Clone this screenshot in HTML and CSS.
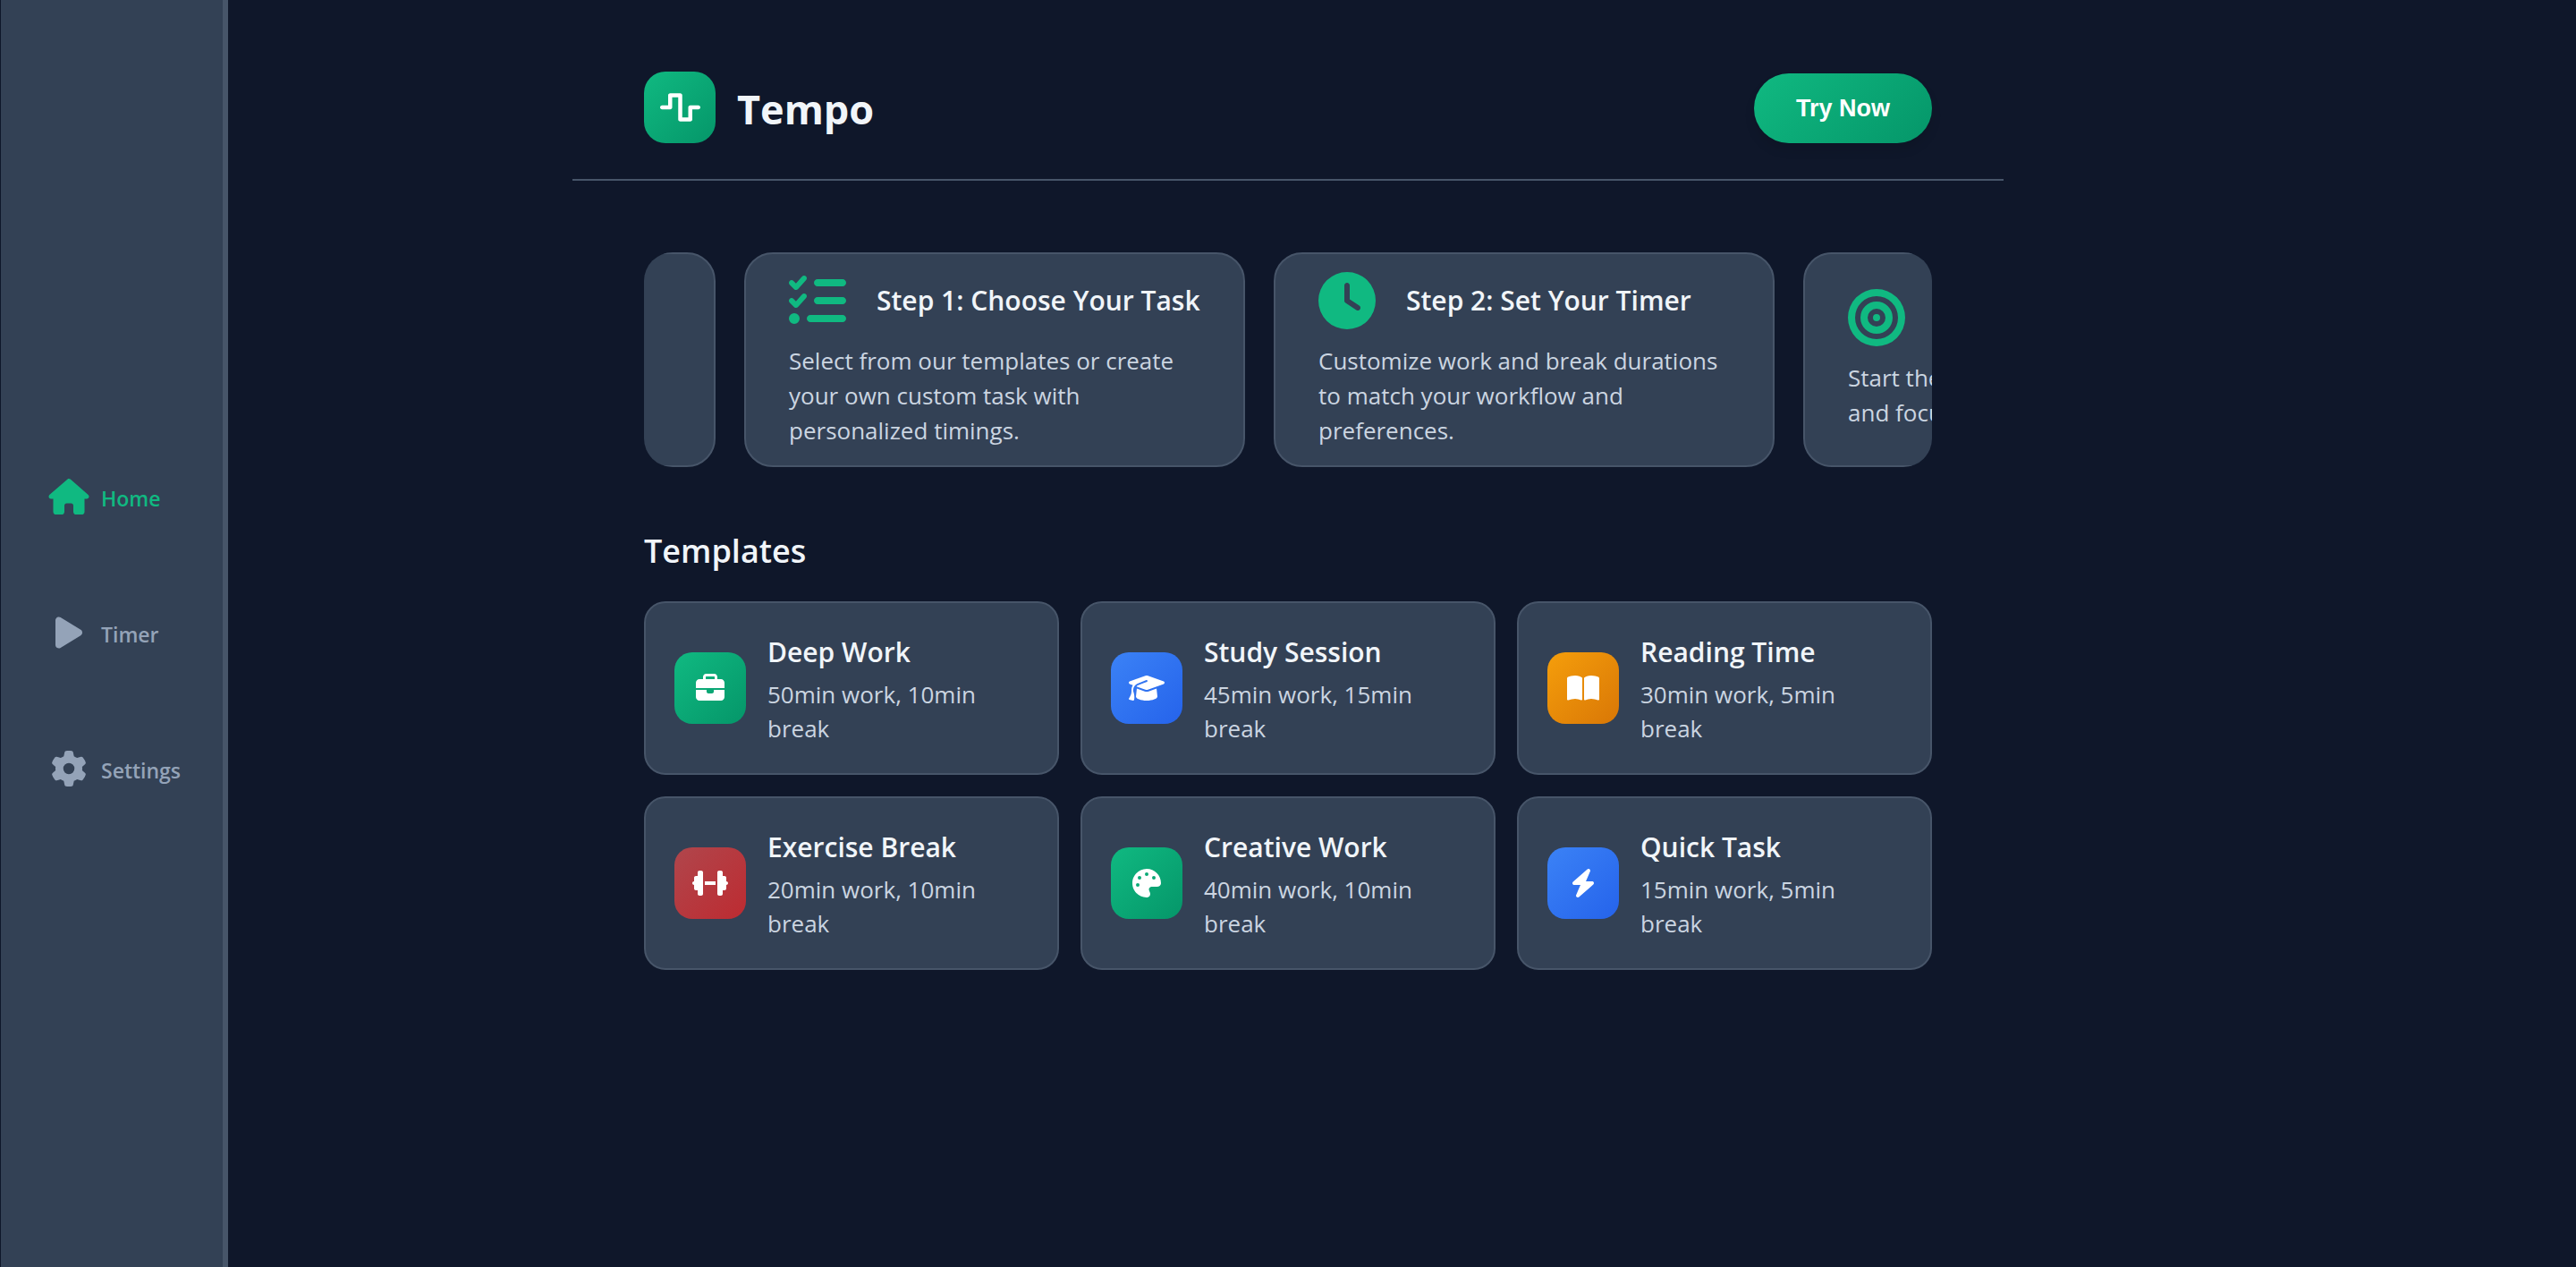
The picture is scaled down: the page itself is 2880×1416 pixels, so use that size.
FILE: index.html
```html
<!DOCTYPE html>
<html lang="en">
<head>
<meta charset="utf-8">
<meta name="viewport" content="width=device-width, initial-scale=1">
<title>Tempo</title>
<link rel="stylesheet" href="styles.css">
</head>
<body>
<div class="app">
  <nav class="sidebar" aria-label="Main">
    <a class="nav-item active" href="#home">
      <svg class="nav-icon" viewBox="0 0 576 512" aria-hidden="true"><path d="M575.8 255.5c0 18-15 32.1-32 32.1h-32l.7 160.2c0 2.7-.2 5.4-.5 8.1V472c0 22.1-17.9 40-40 40H456c-1.1 0-2.2 0-3.3-.1c-1.4 .1-2.8 .1-4.2 .1H416 392c-22.1 0-40-17.9-40-40V448 384c0-17.7-14.3-32-32-32H256c-17.7 0-32 14.3-32 32v64 24c0 22.1-17.9 40-40 40H160 128.1c-1.5 0-3-.1-4.5-.2c-1.2 .1-2.4 .2-3.6 .2H104c-22.1 0-40-17.9-40-40V360c0-.9 0-1.9 .1-2.8V287.6H32c-18 0-32-14-32-32.1c0-9 3-17 10-24L266.4 8c7-7 15-8 22-8s15 2 21 7L564.8 231.5c8 7 12 15 11 24z"/></svg>
      <span class="nav-label">Home</span>
    </a>
    <a class="nav-item" href="#timer">
      <svg class="nav-icon" viewBox="0 0 384 512" aria-hidden="true"><path d="M73 39c-14.8-9.1-33.4-9.4-48.5-.9S0 62.6 0 80V432c0 17.4 9.4 33.4 24.5 41.9s33.7 8.1 48.5-.9L361 297c14.3-8.7 23-24.2 23-41s-8.7-32.2-23-41L73 39z"/></svg>
      <span class="nav-label">Timer</span>
    </a>
    <a class="nav-item" href="#settings">
      <svg class="nav-icon" viewBox="0 0 512 512" aria-hidden="true"><path d="M495.9 166.6c3.2 8.7 .5 18.4-6.4 24.6l-43.3 39.4c1.1 8.3 1.7 16.8 1.7 25.4s-.6 17.1-1.7 25.4l43.3 39.4c6.9 6.2 9.6 15.9 6.4 24.6c-4.4 11.9-9.7 23.3-15.8 34.3l-4.7 8.1c-6.6 11-14 21.4-22.1 31.2c-5.9 7.2-15.7 9.6-24.5 6.8l-55.7-17.7c-13.4 10.3-28.2 18.9-44 25.4l-12.5 57.1c-2 9.1-9 16.3-18.2 17.8c-13.8 2.3-28 3.5-42.5 3.5s-28.7-1.2-42.5-3.5c-9.2-1.5-16.2-8.7-18.2-17.8l-12.5-57.1c-15.8-6.5-30.6-15.1-44-25.4L83.1 425.9c-8.8 2.8-18.6 .3-24.5-6.8c-8.1-9.8-15.5-20.2-22.1-31.2l-4.7-8.1c-6.1-11-11.4-22.4-15.8-34.3c-3.2-8.7-.5-18.4 6.4-24.6l43.3-39.4C64.6 273.1 64 264.6 64 256s.6-17.1 1.7-25.4L22.4 191.2c-6.9-6.2-9.6-15.9-6.4-24.6c4.4-11.9 9.7-23.3 15.8-34.3l4.7-8.1c6.6-11 14-21.4 22.1-31.2c5.9-7.2 15.7-9.6 24.5-6.8l55.7 17.7c13.4-10.3 28.2-18.9 44-25.4l12.5-57.1c2-9.1 9-16.3 18.2-17.8C227.3 1.2 241.5 0 256 0s28.7 1.2 42.5 3.5c9.2 1.5 16.2 8.7 18.2 17.8l12.5 57.1c15.8 6.5 30.6 15.1 44 25.4l55.7-17.7c8.8-2.8 18.6-.3 24.5 6.8c8.1 9.8 15.5 20.2 22.1 31.2l4.7 8.1c6.1 11 11.4 22.4 15.8 34.3zM256 336a80 80 0 1 0 0-160 80 80 0 1 0 0 160z"/></svg>
      <span class="nav-label">Settings</span>
    </a>
  </nav>

  <div class="page">
    <header class="header">
      <div class="brand">
        <div class="logo">
          <svg class="logo-icon" viewBox="0 0 640 512" aria-hidden="true"><path d="M128 64c0-17.7 14.3-32 32-32H320c17.7 0 32 14.3 32 32V416h96V256c0-17.7 14.3-32 32-32H608c17.7 0 32 14.3 32 32s-14.3 32-32 32H512V448c0 17.7-14.3 32-32 32H320c-17.7 0-32-14.3-32-32V96H192V256c0 17.7-14.3 32-32 32H32c-17.7 0-32-14.3-32-32s14.3-32 32-32h96V64z"/></svg>
        </div>
        <h1 class="brand-name">Tempo</h1>
      </div>
      <button class="cta" type="button">Try Now</button>
    </header>

    <main class="content">
      <section class="carousel" aria-label="How it works">
        <div class="track">
          <article class="step" aria-hidden="true"></article>
          <article class="step">
            <div class="step-head">
              <svg class="step-icon" viewBox="0 0 512 512" aria-hidden="true"><path d="M152.1 38.2c9.9 8.9 10.7 24 1.8 33.9l-72 80c-4.4 4.9-10.6 7.8-17.2 7.9s-12.9-2.4-17.6-7L7 113C-2.3 103.6-2.3 88.4 7 79s24.6-9.4 33.9 0l22.1 22.1 55.1-61.2c8.9-9.9 24-10.7 33.9-1.8zm0 160c9.9 8.9 10.7 24 1.8 33.9l-72 80c-4.4 4.9-10.6 7.8-17.2 7.9s-12.9-2.4-17.6-7L7 273c-9.4-9.4-9.4-24.6 0-33.9s24.6-9.4 33.9 0l22.1 22.1 55.1-61.2c8.9-9.9 24-10.7 33.9-1.8zM224 96c0-17.7 14.3-32 32-32H480c17.7 0 32 14.3 32 32s-14.3 32-32 32H256c-17.7 0-32-14.3-32-32zm0 160c0-17.7 14.3-32 32-32H480c17.7 0 32 14.3 32 32s-14.3 32-32 32H256c-17.7 0-32-14.3-32-32zM160 416c0-17.7 14.3-32 32-32H480c17.7 0 32 14.3 32 32s-14.3 32-32 32H192c-17.7 0-32-14.3-32-32zM48 368a48 48 0 1 1 0 96 48 48 0 1 1 0-96z"/></svg>
              <h3 class="card-title">Step 1: Choose Your Task</h3>
            </div>
            <p class="step-text">Select from our templates or create your own custom task with personalized timings.</p>
          </article>
          <article class="step">
            <div class="step-head">
              <svg class="step-icon" viewBox="0 0 512 512" aria-hidden="true"><path fill-rule="evenodd" d="M256 0a256 256 0 1 1 0 512A256 256 0 1 1 256 0zM232 120V256c0 8 4 15.5 10.7 20l96 64c11 7.4 25.9 4.4 33.3-6.7s4.4-25.9-6.7-33.3L280 243.2V120c0-13.3-10.7-24-24-24s-24 10.7-24 24z"/></svg>
              <h3 class="card-title">Step 2: Set Your Timer</h3>
            </div>
            <p class="step-text">Customize work and break durations to match your workflow and preferences.</p>
          </article>
          <article class="step">
            <div class="step-head">
              <svg class="step-icon" viewBox="0 0 512 512" aria-hidden="true"><path fill-rule="evenodd" d="M448 256A192 192 0 1 0 64 256a192 192 0 1 0 384 0zM0 256a256 256 0 1 1 512 0A256 256 0 1 1 0 256zm256 80a80 80 0 1 0 0-160 80 80 0 1 0 0 160zm0-224a144 144 0 1 1 0 288 144 144 0 1 1 0-288zM224 256a32 32 0 1 1 64 0 32 32 0 1 1 -64 0z"/></svg>
            </div>
            <p class="step-text">Start the<br>and focus</p>
          </article>
        </div>
      </section>

      <section class="templates">
        <h2 class="section-title">Templates</h2>
        <div class="grid">
          <article class="template">
            <div class="badge green"><svg class="badge-icon" viewBox="0 0 512 512" aria-hidden="true"><path d="M184 48H328c4.4 0 8 3.6 8 8V96H176V56c0-4.4 3.6-8 8-8zm-56 8V96H64C28.7 96 0 124.7 0 160v96H192 320 512V160c0-35.3-28.7-64-64-64H384V56c0-30.9-25.1-56-56-56H184c-30.9 0-56 25.1-56 56zM512 288H320v32c0 17.7-14.3 32-32 32H224c-17.7 0-32-14.3-32-32V288H0V416c0 35.3 28.7 64 64 64H448c35.3 0 64-28.7 64-64V288z"/></svg></div>
            <div class="template-body">
              <h3 class="card-title">Deep Work</h3>
              <p class="template-text">50min work, 10min break</p>
            </div>
          </article>
          <article class="template">
            <div class="badge blue"><svg class="badge-icon" viewBox="0 0 640 512" aria-hidden="true"><path d="M320 32c-8.1 0-16.1 1.4-23.7 4.1L15.8 137.4C6.3 140.9 0 149.9 0 160s6.3 19.1 15.8 22.6l57.9 20.9C57.3 229.3 48 259.8 48 291.9v28.1c0 28.4-10.8 57.7-22.3 80.8c-6.5 13-13.9 25.8-22.5 37.6C0 442.7-.9 448.3 .9 453.4s6 8.9 11.2 10.2l64 16c4.2 1.1 8.7 .3 12.4-2s6.3-6.1 7.1-10.4c8.6-42.8 4.3-81.2-2.1-108.7C90.3 344.3 86 329.8 80 316.5V291.9c0-30.2 10.2-58.7 27.9-81.5c12.9-15.5 29.6-28 49.2-35.7l157-61.7c8.2-3.2 17.5 .8 20.7 9s-.8 17.5-9 20.7l-157 61.7c-12.4 4.9-23.3 12.4-32.2 21.6l159.6 57.6c7.6 2.7 15.6 4.1 23.7 4.1s16.1-1.4 23.7-4.1L624.2 182.6c9.5-3.4 15.8-12.5 15.8-22.6s-6.3-19.1-15.8-22.6L343.7 36.1C336.1 33.4 328.1 32 320 32zM128 408c0 35.3 86 72 192 72s192-36.7 192-72L496.7 262.6 354.5 314c-11.1 4-22.8 6-34.5 6s-23.5-2-34.5-6L143.3 262.6 128 408z"/></svg></div>
            <div class="template-body">
              <h3 class="card-title">Study Session</h3>
              <p class="template-text">45min work, 15min break</p>
            </div>
          </article>
          <article class="template">
            <div class="badge orange"><svg class="badge-icon" viewBox="0 0 576 512" aria-hidden="true"><path d="M249.6 471.5c10.8 3.8 22.4-4.1 22.4-15.5V78.6c0-4.2-1.6-8.4-5-11C247.4 52 202.4 32 144 32C93.5 32 46.3 45.3 18.1 56.1C6.8 60.5 0 71.7 0 83.8V454.1c0 11.9 12.8 20.2 24.1 16.5C55.6 460.1 105.5 448 144 448c33.9 0 79 14 105.6 23.5zm76.8 0C353 462 398.1 448 432 448c38.5 0 88.4 12.1 119.9 22.6c11.3 3.8 24.1-4.6 24.1-16.5V83.8c0-12.1-6.8-23.3-18.1-27.6C529.7 45.3 482.5 32 432 32c-58.4 0-103.4 20-123 35.6c-3.3 2.6-5 6.8-5 11V456c0 11.4 11.7 19.3 22.4 15.5z"/></svg></div>
            <div class="template-body">
              <h3 class="card-title">Reading Time</h3>
              <p class="template-text">30min work, 5min break</p>
            </div>
          </article>
          <article class="template">
            <div class="badge red"><svg class="badge-icon" viewBox="0 0 640 512" aria-hidden="true"><path d="M96 64c0-17.7 14.3-32 32-32h32c17.7 0 32 14.3 32 32V224v64V448c0 17.7-14.3 32-32 32H128c-17.7 0-32-14.3-32-32V384H64c-17.7 0-32-14.3-32-32V288c-17.7 0-32-14.3-32-32s14.3-32 32-32V160c0-17.7 14.3-32 32-32H96V64zm448 0v64h32c17.7 0 32 14.3 32 32v64c17.7 0 32 14.3 32 32s-14.3 32-32 32v64c0 17.7-14.3 32-32 32H544v64c0 17.7-14.3 32-32 32H480c-17.7 0-32-14.3-32-32V288 224 64c0-17.7 14.3-32 32-32h32c17.7 0 32 14.3 32 32zM416 224v64H224V224H416z"/></svg></div>
            <div class="template-body">
              <h3 class="card-title">Exercise Break</h3>
              <p class="template-text">20min work, 10min break</p>
            </div>
          </article>
          <article class="template">
            <div class="badge green"><svg class="badge-icon" viewBox="0 0 512 512" aria-hidden="true"><path fill-rule="evenodd" d="M512 256c0 .9 0 1.8 0 2.7c-.4 36.5-33.6 61.3-70.1 61.3H344c-26.5 0-48 21.5-48 48c0 3.4 .4 6.7 1 9.9c2.1 10.2 6.5 20 10.8 29.9c6.1 13.8 12.1 27.5 12.1 42c0 31.8-21.6 60.7-53.4 62c-3.5 .1-7 .2-10.6 .2C114.6 512 0 397.4 0 256S114.6 0 256 0S512 114.6 512 256zM128 288a32 32 0 1 0 -64 0 32 32 0 1 0 64 0zm0-96a32 32 0 1 0 0-64 32 32 0 1 0 0 64zM288 96a32 32 0 1 0 -64 0 32 32 0 1 0 64 0zm96 96a32 32 0 1 0 0-64 32 32 0 1 0 0 64z"/></svg></div>
            <div class="template-body">
              <h3 class="card-title">Creative Work</h3>
              <p class="template-text">40min work, 10min break</p>
            </div>
          </article>
          <article class="template">
            <div class="badge blue"><svg class="badge-icon" viewBox="0 0 448 512" aria-hidden="true"><path d="M349.4 44.6c5.9-13.7 1.5-29.7-10.6-38.5s-28.6-8-39.9 1.8l-256 224c-10 8.8-13.6 22.9-8.9 35.3S50.7 288 64 288H175.5L98.6 467.4c-5.9 13.7-1.5 29.7 10.6 38.5s28.6 8 39.9-1.8l256-224c10-8.8 13.6-22.9 8.9-35.3s-16.6-20.7-30-20.7H272.5L349.4 44.6z"/></svg></div>
            <div class="template-body">
              <h3 class="card-title">Quick Task</h3>
              <p class="template-text">15min work, 5min break</p>
            </div>
          </article>
        </div>
      </section>
    </main>
  </div>
</div>
</body>
</html>
```
FILE: styles.css
```css
:root {
  --bg: #0f172a;
  --surface: #334155;
  --border: #475569;
  --text: #f1f5f9;
  --text-soft: #cbd5e1;
  --text-muted: #94a3b8;
  --accent: #10b981;
  --accent-dark: #059669;
}

* {
  box-sizing: border-box;
}

body {
  margin: 0;
  background: var(--bg);
  color: var(--text);
  font-family: "Segoe UI", "Open Sans", "Noto Sans", sans-serif;
}

h1, h2, h3, p {
  margin: 0;
}

svg {
  display: block;
  fill: currentColor;
}

/* Equal side columns keep the page centred in the window */
.app {
  display: grid;
  grid-template-columns: 255px minmax(0, 1fr) 255px;
  min-height: 100vh;
}

.sidebar {
  display: flex;
  flex-direction: column;
  justify-content: center;
  gap: 104px;
  padding: 0 0 2px 53px;
  background: var(--surface);
  border-left: 1px solid var(--bg);
  border-right: 6px solid var(--border);
}

.nav-item {
  display: flex;
  align-items: center;
  gap: 13px;
  height: 48px;
  color: var(--text-muted);
  text-decoration: none;
}

.nav-item.active {
  color: var(--accent);
}

.nav-icon {
  width: 46px;
  height: 40px;
}

.nav-label {
  padding-top: 4px;
  font-size: 23px;
  font-weight: 600;
  line-height: 32px;
}

.page {
  width: 100%;
  max-width: 1600px;
  margin: 0 auto;
}

.header {
  display: flex;
  align-items: flex-end;
  justify-content: space-between;
  padding: 80px 80px 40px;
  border-bottom: 2px solid var(--border);
}

.brand {
  display: flex;
  align-items: center;
  gap: 24px;
}

.logo {
  display: grid;
  place-items: center;
  width: 80px;
  height: 80px;
  border-radius: 24px;
  background: linear-gradient(135deg, var(--accent), var(--accent-dark));
  color: #fff;
}

.logo-icon {
  height: 36px;
}

.brand-name {
  padding-top: 4px;
  font-size: 45px;
  font-weight: 700;
  line-height: 64px;
}

.cta {
  padding: 24px 47px;
  border: 0;
  border-radius: 40px;
  background: linear-gradient(135deg, var(--accent), var(--accent-dark));
  box-shadow: 0 8px 12px rgba(0, 0, 0, 0.1);
  color: #fff;
  font-family: "Liberation Sans", Arial, sans-serif;
  font-size: 27px;
  font-weight: 700;
  line-height: 30px;
}

.content {
  padding: 80px;
}

.carousel {
  overflow: hidden;
  border-radius: 32px;
}

/* The track is scrolled part of the way through its first card */
.track {
  display: flex;
  gap: 32px;
  transform: translateX(-480px);
}

.step {
  display: flex;
  flex: 0 0 560px;
  flex-direction: column;
  justify-content: center;
  gap: 16px;
  height: 240px;
  padding: 0 48px;
  border: 2px solid var(--border);
  border-radius: 32px;
  background: var(--surface);
}

.step-head {
  display: flex;
  align-items: center;
  gap: 34px;
}

.step-icon {
  width: 64px;
  height: 64px;
  color: var(--accent);
}

.card-title {
  font-size: 30px;
  font-weight: 600;
  line-height: 48px;
}

.step-text {
  color: var(--text-soft);
  font-size: 26px;
  line-height: 39px;
}

.templates {
  padding-top: 64px;
}

.section-title {
  margin-bottom: 26px;
  font-size: 36px;
  font-weight: 600;
  line-height: 60px;
}

.grid {
  display: grid;
  grid-template-columns: repeat(3, minmax(0, 1fr));
  gap: 24px;
}

.template {
  display: flex;
  align-items: center;
  gap: 24px;
  padding: 31px 32px;
  border: 2px solid var(--border);
  border-radius: 24px;
  background: var(--surface);
}

.template-body {
  display: grid;
  gap: 4px;
}

.badge {
  display: grid;
  flex: none;
  place-items: center;
  width: 80px;
  height: 80px;
  border-radius: 20px;
  color: #fff;
}

.badge-icon {
  height: 32px;
}

.green {
  background: linear-gradient(135deg, var(--accent), var(--accent-dark));
}

.blue {
  background: linear-gradient(135deg, #3b82f6, #2563eb);
}

.orange {
  background: linear-gradient(135deg, #f59e0b, #d97706);
}

.red {
  background: linear-gradient(135deg, #b0464c, #bd2b31);
}

.template-text {
  color: var(--text-soft);
  font-size: 26px;
  line-height: 38px;
}
```
